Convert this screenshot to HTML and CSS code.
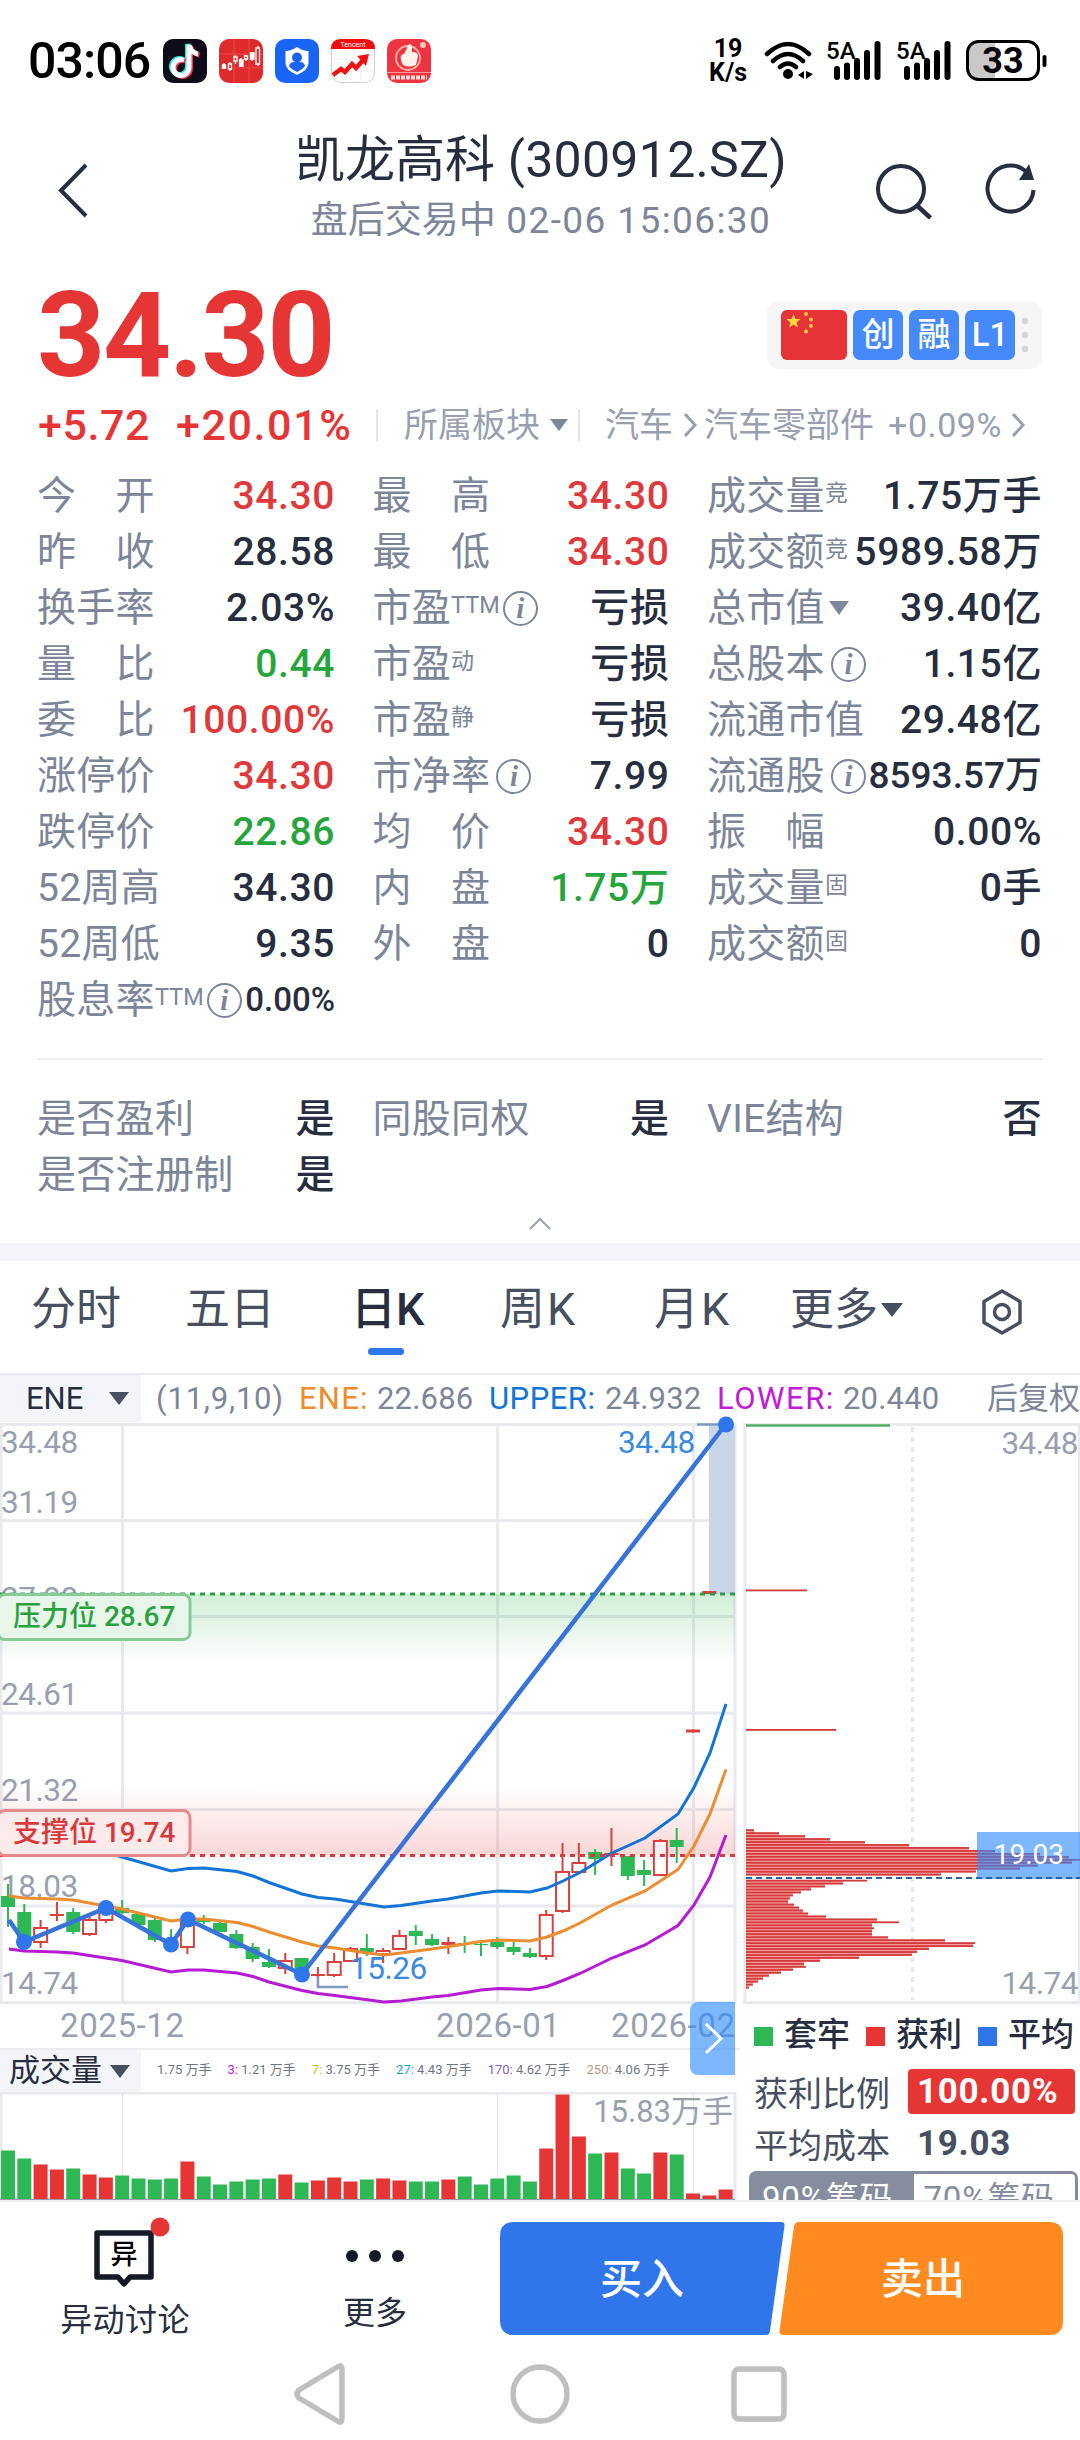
FILE: index.html
```
<!DOCTYPE html>
<html lang="zh-CN">
<head>
    <meta charset="UTF-8">
    <meta name="viewport" content="width=device-width, initial-scale=1.0">
    <title>凯龙高科 (300912.SZ)</title>
    <link rel="stylesheet" href="styles.css">
</head>
<body>
    <!-- Status bar -->
    <div class="status-bar">
        <span class="clock">03:06</span>
        <svg class="app" viewBox="0 0 44 44"><rect width="44" height="44" rx="10" fill="#0d0c18"/><g fill="none" stroke-width="5"><path d="M21 21a8 8 0 1 0 5 8V6q2 8 9 9" stroke="#25e8e4" transform="translate(-1.5 -1)"/><path d="M21 21a8 8 0 1 0 5 8V6q2 8 9 9" stroke="#fe2c55" transform="translate(1.5 1)"/><path d="M21 21a8 8 0 1 0 5 8V6q2 8 9 9" stroke="#fff"/></g></svg>
        <svg class="app" viewBox="0 0 44 44"><rect width="44" height="44" rx="10" fill="#e02a2c"/><path d="M0 15H44M0 29H44M15 0V44M30 0V44" stroke="#e84a4a"/><g stroke="#fff" fill="#fff" stroke-width="1.3"><path d="M5 24v6M11 23v9M16.500 16v9M22 19v9M27 16v6M33 13v9M39 7v20"/><path d="M3.500 26h3v3h-3zM20.500 21h3.500v6h-3.500zM31.500 14h3.500v6h-3.500z"/><path fill="#e02a2c" d="M9.500 25h3v5h-3zM15 18h3v4h-3zM25.500 17h3v3h-3zM37 9h3.500v16h-3.500z"/></g></svg>
        <svg class="app" viewBox="0 0 44 44"><rect width="44" height="44" rx="10" fill="#1764f6"/><path d="M22 8q6 4 11.500 4v12q0 7-11.500 12Q10.500 31 10.500 24V12Q16 12 22 8z" fill="#fff"/><circle cx="22" cy="18.500" r="5" fill="#1764f6"/><path d="M14 27q1-4 5-4h6q4 0 5 4-2 3-8 6-6-3-8-6z" fill="#1764f6"/></svg>
        <svg class="app" viewBox="0 0 44 44"><rect x=".5" y=".5" width="43" height="43" rx="10" fill="#fff" stroke="#ccc"/><path d="M0 10Q0 0 10 0H34Q44 0 44 10z" fill="#f50a0c"/><path d="M15 10V44M30 10V44M0 20H44M0 32H44" stroke="#eee"/><text x="22" y="8" class="tiny" text-anchor="middle">Tencent</text><path d="M2 36l8-6 4 3 7-8 4 4 9-10" fill="none" stroke="#f01214" stroke-width="4.500"/><path d="M26 17l12-2-3 12z" fill="#f01214"/></svg>
        <svg class="app" viewBox="0 0 44 44"><rect width="44" height="44" rx="10" fill="#ee3440"/><circle cx="21" cy="19" r="12" fill="none" stroke="#ffb7ad" stroke-width="1.800"/><path d="M14 16q4 0 7-10 3-2 4 1v6q6 0 6 4l-2 9q-7 3-13 0-3-5-2-10z" fill="#fff4ea"/><circle cx="36" cy="6" r="3" fill="#ffc6be"/><path d="M0 33.500H44" stroke="#f99"/><path d="M4 38.500H40" stroke="#ffd8d4" stroke-width="4" stroke-dasharray="4 1"/></svg>
        <div class="status-right">
            <div class="speed"><span>19</span><span>K/s</span></div>
            <svg class="wifi" viewBox="0 0 50 40"><g fill="none" stroke="#000" stroke-width="4.500" stroke-linecap="round"><path d="M3 13Q24-7 45 13M9 20Q24 6 39 20M16 26Q24 19 32 26"/></g><circle cx="24" cy="33" r="5"/><path d="M40 30v8l-6-4zM42 38v-8l7 3z"/></svg>
            <svg class="signal" viewBox="0 0 56 40"><text x="0" y="18" class="sig-text">5A</text><path d="M11 28V36M21 24.500V36M31 20V36M41 12V36M51.500 3V36" stroke="#000" stroke-width="6" stroke-linecap="round"/></svg>
            <svg class="signal" viewBox="0 0 56 40"><text x="0" y="18" class="sig-text">5A</text><path d="M11 28V36M21 24.500V36M31 20V36M41 12V36M51.500 3V36" stroke="#000" stroke-width="6" stroke-linecap="round"/></svg>
            <svg class="battery" viewBox="0 0 82 42"><path d="M29 2H14Q2 2 2 13V28Q2 39 14 39H29z" fill="#c9c9c9"/><rect x="1.500" y="1.500" width="71" height="38" rx="11" fill="none" stroke="#000" stroke-width="3"/><path d="M78.500 17v8" stroke="#000" stroke-width="4" stroke-linecap="round"/><text x="37" y="33" class="bat-text" text-anchor="middle">33</text></svg>
        </div>
    </div>

    <!-- Header -->
    <header class="header">
        <svg class="back" viewBox="0 0 40 60"><path d="M34 4L9 29.500L34 55" fill="none" stroke="#272e40" stroke-width="4"/></svg>
        <div class="titles">
            <h1>凯龙高科<span> (300912.SZ)</span></h1>
            <p>盘后交易中<span> 02-06 15:06:30</span></p>
        </div>
        <div class="head-icons">
            <svg viewBox="0 0 60 56"><circle cx="26" cy="26" r="23" fill="none" stroke="#272e40" stroke-width="4"/><path d="M42.500 43l13 12" stroke="#272e40" stroke-width="4.500"/></svg>
            <svg viewBox="0 0 60 56"><path d="M41 8.500A23 23 0 1 0 48.500 27" fill="none" stroke="#272e40" stroke-width="4"/><path d="M44 1l5 16H34z" fill="#272e40"/></svg>
        </div>
    </header>

    <!-- Price -->
    <section class="price-row">
        <span class="price">34.30</span>
        <div class="badges">
            <svg class="flag" viewBox="0 0 66 50"><rect width="66" height="50" rx="6" fill="#e53338"/><path d="M12.500 4l2 5h5l-4 3.500 1.500 5-4.500-3-4.500 3 1.500-5-4-3.500h5z" fill="#ffd83d"/><g fill="#ffc93d"><circle cx="25" cy="4" r="2"/><circle cx="30" cy="9.500" r="2"/><circle cx="30" cy="16" r="2"/><circle cx="25" cy="21.500" r="2"/></g></svg>
            <span>创</span><span>融</span><span class="lv">L1</span>
            <svg class="more-dots" viewBox="0 0 8 40"><g fill="#d5d6da"><circle cx="4" cy="6" r="3.200"/><circle cx="4" cy="20" r="3.200"/><circle cx="4" cy="34" r="3.200"/></g></svg>
        </div>
    </section>
    <section class="change-row">
        <b class="chg">+5.72</b><b class="pct">+20.01%</b>
        <div class="sector">所属板块<i class="tri"></i></div>
        <div class="industry">汽车<svg class="gt" viewBox="0 0 16 26"><path d="M2 2L12 13L2 24"/></svg>汽车零部件<em>+0.09%</em><svg class="gt last" viewBox="0 0 16 26"><path d="M2 2L12 13L2 24"/></svg></div>
    </section>

    <!-- Quote table -->
    <section class="quotes">
        <div class="cell"><span>今　开</span><b class="red">34.30</b></div>
        <div class="cell"><span>最　高</span><b class="red">34.30</b></div>
        <div class="cell"><span>成交量<sup>竞</sup></span><b>1.75万手</b></div>
        <div class="cell"><span>昨　收</span><b>28.58</b></div>
        <div class="cell"><span>最　低</span><b class="red">34.30</b></div>
        <div class="cell"><span>成交额<sup>竞</sup></span><b>5989.58万</b></div>
        <div class="cell"><span>换手率</span><b>2.03%</b></div>
        <div class="cell"><span>市盈<sup class="ttm">TTM</sup><i class="info">i</i></span><b>亏损</b></div>
        <div class="cell"><span>总市值<i class="tri big"></i></span><b>39.40亿</b></div>
        <div class="cell"><span>量　比</span><b class="green">0.44</b></div>
        <div class="cell"><span>市盈<sup>动</sup></span><b>亏损</b></div>
        <div class="cell"><span>总股本<i class="info">i</i></span><b>1.15亿</b></div>
        <div class="cell"><span>委　比</span><b class="red">100.00%</b></div>
        <div class="cell"><span>市盈<sup>静</sup></span><b>亏损</b></div>
        <div class="cell"><span>流通市值</span><b>29.48亿</b></div>
        <div class="cell"><span>涨停价</span><b class="red">34.30</b></div>
        <div class="cell"><span>市净率<i class="info">i</i></span><b>7.99</b></div>
        <div class="cell"><span>流通股<i class="info">i</i></span><b class="fit">8593.57万</b></div>
        <div class="cell"><span>跌停价</span><b class="green">22.86</b></div>
        <div class="cell"><span>均　价</span><b class="red">34.30</b></div>
        <div class="cell"><span>振　幅</span><b>0.00%</b></div>
        <div class="cell"><span>52周高</span><b>34.30</b></div>
        <div class="cell"><span>内　盘</span><b class="green">1.75万</b></div>
        <div class="cell"><span>成交量<sup>固</sup></span><b>0手</b></div>
        <div class="cell"><span>52周低</span><b>9.35</b></div>
        <div class="cell"><span>外　盘</span><b>0</b></div>
        <div class="cell"><span>成交额<sup>固</sup></span><b>0</b></div>
        <div class="cell"><span>股息率<sup class="ttm">TTM</sup><i class="info">i</i></span><b class="small">0.00%</b></div>
    </section>
    <section class="quotes extra">
        <div class="cell"><span>是否盈利</span><b>是</b></div>
        <div class="cell"><span>同股同权</span><b>是</b></div>
        <div class="cell"><span>VIE结构</span><b>否</b></div>
        <div class="cell"><span>是否注册制</span><b>是</b></div>
    </section>
    <div class="collapse"><svg viewBox="0 0 24 14"><path d="M2 12L12 2L22 12" fill="none" stroke="#9aa1b0" stroke-width="2"/></svg></div>

    <!-- Period tabs -->
    <nav class="tabs">
        <span>分时</span><span>五日</span><span class="active">日K</span><span>周K</span><span>月K</span><span>更多<i class="tri tab-tri"></i></span>
        <svg class="hex" viewBox="0 0 42 46"><path d="M21 2L39 12.500V33.500L21 44L3 33.500V12.500z" fill="none" stroke="#474f61" stroke-width="3.500" stroke-linejoin="round"/><circle cx="21" cy="23" r="7.500" fill="none" stroke="#474f61" stroke-width="3.500"/></svg>
    </nav>
    <div class="indicator">
        <span class="picker">ENE<i class="tri dark"></i></span>
        <span class="params">(11,9,10)</span>
        <span class="ene">ENE:</span><span class="v1">22.686</span>
        <span class="upper">UPPER:</span><span class="v2">24.932</span>
        <span class="lower">LOWER:</span><span class="v3">20.440</span>
        <span class="fq">后复权</span>
    </div>

    <!-- Charts -->
    <main class="charts">
        <div class="left">
            <svg class="kline" width="740" height="584" viewBox="0 1422 740 584">
                <defs>
                    <linearGradient id="gGreen" x1="0" y1="0" x2="0" y2="1"><stop offset="0" stop-color="#2bb24c" stop-opacity=".22"/><stop offset="1" stop-color="#2bb24c" stop-opacity="0"/></linearGradient>
                    <linearGradient id="gRed" x1="0" y1="0" x2="0" y2="1"><stop offset="0" stop-color="#e63535" stop-opacity="0"/><stop offset="1" stop-color="#e63535" stop-opacity=".2"/></linearGradient>
                </defs>
                <path class="grid" d="M0 1424.500H736M0 1520.500H736M0 1616.500H736M0 1713H736M0 1809.500H736M0 1906H736M0 2002.500H736M1 1424V2002M122.500 1424V2002M497.500 1424V2002M693.500 1424V2002M735 1424V2002"/>
                <rect x="709" y="1426" width="26" height="168" fill="#c9d5e8"/>
                <g class="axis">
                    <text x="1" y="1453">34.48</text><text x="1" y="1513">31.19</text><text x="1" y="1609">27.90</text><text x="1" y="1705">24.61</text>
                    <text x="1" y="1801">21.32</text><text x="1" y="1897">18.03</text><text x="1" y="1994">14.74</text>
                </g>
                <rect x="0" y="1594" width="735" height="70" fill="url(#gGreen)"/>
                <rect x="0" y="1785" width="735" height="70" fill="url(#gRed)"/>
                <g id="candles"></g>
                <polyline class="ln" stroke="#1374d8" points="80,1846 122,1857 171,1871 188,1868.500 204,1868 237,1871.500 253,1876 269,1882.500 302,1894 318,1897.500 335,1899 384,1907 401,1905.500 432,1901 448,1899 481,1893 498,1891 530,1892 547,1888 563,1881 580,1872.500 612,1853 645,1838 678,1814 694,1787.500 710,1753 726,1704"/>
                <polyline class="ln" stroke="#ea8e31" points="9,1896 24,1898 57,1899 73,1900 106,1906 122,1909 171,1921 188,1919 204,1919 237,1922.500 253,1926.500 269,1932 302,1942 318,1946 335,1948 367,1953 384,1955 401,1953 432,1949 465,1944 481,1941.500 498,1940 530,1941 547,1937 563,1931 580,1923 612,1905 645,1891 678,1869.500 694,1846 710,1814 726,1769.500"/>
                <polyline class="ln" stroke="#b51cd2" points="9,1949 24,1951 57,1952 73,1953 122,1960.500 171,1972 188,1970 204,1970 237,1973 253,1976.500 269,1982 302,1990.500 318,1993.500 335,1995.500 384,2002 401,2001 432,1997 448,1995.500 481,1990 498,1988.500 530,1989.500 547,1986.500 563,1980.500 580,1973.500 612,1958 645,1945 678,1925.500 694,1905 710,1877 726,1835"/>
                <path d="M0 1594H735" stroke="#2aa040" stroke-width="3" stroke-dasharray="5 5"/>
                <path d="M0 1855.500H735" stroke="#d63a3c" stroke-width="3" stroke-dasharray="5 5"/>
                <path d="M697 1424.500H722M318 1977V1987H348" fill="none" stroke="#7f9bc0" stroke-width="2.500"/>
                <polyline points="9,1920 24,1942 106,1908 171,1944.500 188,1919.500 302,1974.500 726,1424" fill="none" stroke="#3873da" stroke-width="4.500"/>
                <g fill="#2f76ea"><circle cx="24" cy="1942" r="8"/><circle cx="106" cy="1908" r="8"/><circle cx="171" cy="1944.500" r="8"/><circle cx="188" cy="1919.500" r="8"/><circle cx="302" cy="1974.500" r="8"/><circle cx="726" cy="1424.500" r="8"/></g>
                <g class="axis mark"><text x="618" y="1453">34.48</text><text x="350" y="1979">15.26</text></g>
                <rect x="-2" y="1594.500" width="192" height="45" rx="7" fill="#e8f6ea" stroke="#85cb95" stroke-width="3"/>
                <text x="13" y="1626" class="level" fill="#2aa040">压力位 28.67</text>
                <rect x="-2" y="1810.500" width="192" height="45" rx="7" fill="#fdeaea" stroke="#e58a8c" stroke-width="3"/>
                <text x="13" y="1842" class="level" fill="#d63a3c">支撑位 19.74</text>
            </svg>
            <div class="dates"><span>2025-12</span><span>2026-01</span><span>2026-02</span></div>
            <div class="vol-head">
                <span class="picker">成交量<i class="tri dark"></i></span>
                <div class="mas"><span>1.75 万手</span><span><i class="m3">3:</i> 1.21 万手</span><span><i class="m7">7:</i> 3.75 万手</span><span><i class="m27">27:</i> 4.43 万手</span><span><i class="m170">170:</i> 4.62 万手</span><span><i class="m250">250:</i> 4.06 万手</span></div>
            </div>
            <svg class="volume" width="740" height="108" viewBox="0 2092 740 108">
                <path class="grid" d="M0 2093H736M1 2093V2200M735 2093V2200"/>
                <path d="M122.500 2094V2200M497.500 2094V2200M693.500 2094V2200" stroke="#e4e5ea" stroke-width="1"/>
                <g id="bars"></g>
                <path d="M0 2199.500H735" stroke="#9a9ca8"/>
                <text x="733" y="2122" class="vol-max" text-anchor="end">15.83万手</text>
            </svg>
            <div class="expand"><svg viewBox="0 0 45 73"><path d="M16 22L31 36.500L16 51" fill="none" stroke="#fff" stroke-width="3"/></svg></div>
        </div>
        <div class="right">
            <svg class="chips" width="340" height="584" viewBox="740 1422 340 584">
                <path class="grid" d="M743 1424.500H1080M745 1424V2002M743 2002.500H1080M1079.500 1424V2002"/>
                <path d="M912.500 1427V2000" stroke="#e8e9ee" stroke-width="3" stroke-dasharray="5 5"/>
                <path d="M746 1425.500H890" stroke="#4fae63" stroke-width="2.500"/>
                <g id="chips"></g>
                <rect x="977" y="1832" width="103" height="47" fill="#2d8cff" fill-opacity=".62"/>
                <path d="M746 1878H1080" stroke="#2b62b0" stroke-width="2" stroke-dasharray="6 4"/>
                <text x="1064" y="1864" class="avg" text-anchor="end">19.03</text>
                <g class="axis" text-anchor="end"><text x="1078" y="1454">34.48</text><text x="1078" y="1994">14.74</text></g>
            </svg>
            <div class="legend"><span class="lg-g">套牢</span><span class="lg-r">获利</span><span class="lg-b">平均</span></div>
            <div class="stat"><span>获利比例</span><b class="hot">100.00%</b></div>
            <div class="stat second"><span>平均成本</span><b>19.03</b></div>
            <div class="switch"><span class="on">90%筹码</span><span>70%筹码</span></div>
        </div>
    </main>

    <!-- Bottom actions -->
    <footer class="actions">
        <div class="act">
            <svg width="92" height="76" viewBox="0 0 92 76"><path d="M18 17H72V61H51L45 68L39 61H18z" fill="none" stroke="#151a26" stroke-width="5.500" stroke-linejoin="round"/><text x="45" y="48" text-anchor="middle" class="yi">异</text><circle cx="81" cy="11" r="9.500" fill="#e63535"/></svg>
            <span>异动讨论</span>
        </div>
        <div class="act more">
            <svg width="60" height="76" viewBox="0 0 60 76"><g fill="#151a26"><circle cx="7" cy="40" r="6"/><circle cx="30" cy="40" r="6"/><circle cx="53" cy="40" r="6"/></g></svg>
            <span>更多</span>
        </div>
        <div class="trade">
            <svg width="564" height="114" viewBox="0 0 564 114">
                <path d="M14 0H281Q285 0 284.500 4L270 109Q269.500 113 266 113H14Q0 113 0 99V14Q0 0 14 0z" fill="#3076ea"/>
                <path d="M299 0H549Q563 0 563 14V99Q563 113 549 113H283Q279 113 279.500 109L294 4Q295 0 299 0z" fill="#ff8a20"/>
                <text x="142" y="72" text-anchor="middle">买入</text>
                <text x="423" y="72" text-anchor="middle">卖出</text>
            </svg>
        </div>
    </footer>
    <div class="sys-nav">
        <svg width="500" height="64" viewBox="0 0 500 64"><g fill="none" stroke="#bfbfbf" stroke-width="5.500" stroke-linejoin="round"><path d="M49 4Q52 3 52 8V56Q52 61 49 60L9 36Q5 32 9 28z"/><circle cx="250" cy="32" r="27"/><rect x="444" y="7" width="50" height="50" rx="5"/></g></svg>
    </div>
    <script src="script.js"></script>
</body>
</html>
```
FILE: styles.css
```
* {
    box-sizing: border-box;
}
body {
    margin: 0;
    width: 1080px;
    height: 2440px;
    overflow: hidden;
    background-color: #fff;
    font-family: Roboto, "Noto Sans CJK SC", sans-serif;
    color: #272e40;
}
svg {
    display: block;
    flex: none;
}
i, em {
    font-style: normal;
}
.tri {
    display: inline-block;
    border: 9px solid transparent;
    border-top: 12px solid #7d8699;
    border-bottom: 0;
}

/* Status bar */
.status-bar {
    display: flex;
    align-items: center;
    gap: 12px;
    height: 122px;
    padding: 0 32px 0 28px;
    color: #000;
}
.clock {
    width: 123px;
    font-size: 50px;
    font-weight: 500;
    letter-spacing: -0.9px;
}
.app {
    width: 44px;
    height: 44px;
}
.tiny {
    font-size: 7px;
    fill: #fff;
}
.status-right {
    display: flex;
    align-items: center;
    margin-left: auto;
}
.speed {
    display: flex;
    flex-direction: column;
    align-items: center;
    width: 42px;
    font-size: 25px;
    font-weight: 700;
    line-height: 24px;
    margin-right: 15px;
}
.wifi {
    width: 50px;
    height: 40px;
    margin-right: 12px;
}
.signal {
    width: 56px;
    height: 40px;
    margin-right: 14px;
    overflow: visible;
}
.sig-text {
    font-size: 24px;
    font-weight: 500;
}
.battery {
    width: 82px;
    height: 42px;
}
.bat-text {
    font-size: 36px;
    font-weight: 700;
}

/* Header */
.header {
    display: flex;
    align-items: center;
    justify-content: space-between;
    height: 138px;
    padding: 0 35px 0 52px;
}
.back {
    width: 40px;
    height: 60px;
    margin-right: 115px;
}
.titles {
    text-align: center;
    white-space: nowrap;
}
.titles h1 {
    margin: 0;
    font-size: 50px;
    font-weight: 400;
    line-height: 66px;
}
.titles h1 span {
    letter-spacing: 0.3px;
}
.titles p {
    margin: 0;
    padding-bottom: 6px;
    font-size: 37px;
    line-height: 56px;
    color: #7d8699;
}
.titles p span {
    letter-spacing: 1.4px;
}
.head-icons {
    display: flex;
    gap: 50px;
}
.head-icons svg {
    width: 60px;
    height: 56px;
}

/* Price */
.price-row {
    display: flex;
    align-items: center;
    justify-content: space-between;
    height: 148px;
    padding: 2px 38px 0 37px;
}
.price {
    font-size: 119px;
    font-weight: 700;
    letter-spacing: -2.3px;
    color: #e63535;
}
.badges {
    display: flex;
    align-items: center;
    gap: 6px;
    height: 68px;
    padding: 0 13px 0 14px;
    border-radius: 12px;
    background-color: #f6f6f7;
}
.badges span {
    width: 50px;
    height: 50px;
    border-radius: 7px;
    background-color: #4589fb;
    color: #fff;
    font-size: 33px;
    font-weight: 500;
    line-height: 50px;
    text-align: center;
}
.flag {
    width: 66px;
    height: 50px;
}
.more-dots {
    width: 8px;
    height: 40px;
}
.change-row {
    display: flex;
    align-items: center;
    height: 34px;
    padding-left: 38px;
    font-size: 34px;
    line-height: 34px;
    white-space: nowrap;
    color: #98a0b0;
}
.change-row b {
    font-size: 43px;
    font-weight: 500;
    letter-spacing: 0.6px;
    color: #e63535;
}
.chg {
    width: 138px;
}
.change-row .pct {
    width: 200px;
    letter-spacing: 1.6px;
}
.sector {
    display: flex;
    align-items: center;
    width: 204px;
    height: 32px;
    padding-left: 26px;
    border-left: 2px solid #e3e5ea;
    border-right: 2px solid #e3e5ea;
}
.sector .tri {
    margin-left: 10px;
}
.industry {
    display: flex;
    align-items: center;
    padding-left: 25px;
}
.industry em {
    margin-left: 14px;
    letter-spacing: 0.6px;
}
.gt {
    width: 16px;
    height: 26px;
    margin: 0 5px 0 10px;
}
.gt.last {
    margin-left: 9px;
}
.gt path {
    fill: none;
    stroke: #98a0b0;
    stroke-width: 3;
}

/* Quote table */
.quotes {
    display: grid;
    grid-template-columns: 298px 297px 335px;
    grid-auto-rows: 56px;
    column-gap: 37.5px;
    height: 618px;
    margin: 0 37px;
    padding-top: 26px;
    border-bottom: 2px solid #eeeff2;
}
.cell {
    display: flex;
    align-items: center;
    justify-content: space-between;
    font-size: 39px;
    line-height: 56px;
    letter-spacing: 0.3px;
    white-space: nowrap;
    color: #7d8699;
}
.cell span {
    display: flex;
    align-items: center;
}
.cell b {
    font-weight: 500;
    letter-spacing: 0.6px;
    color: #272e40;
}
.cell b.red {
    color: #df3a3b;
}
.cell b.green {
    color: #26a53d;
}
.cell b.fit {
    font-size: 37px;
    letter-spacing: 0;
}
.cell b.small {
    font-size: 33px;
    letter-spacing: 0;
}
.cell sup {
    margin-bottom: 5px;
    font-size: 23px;
    line-height: 1;
    letter-spacing: 0;
}
.cell .ttm {
    font-size: 23.5px;
}
.info {
    display: inline-block;
    width: 35px;
    height: 35px;
    margin-left: 6px;
    margin-right: -4px;
    border: 2px solid #7d8699;
    border-radius: 50%;
    font: italic bold 29px/30px "Liberation Serif", serif;
    letter-spacing: 0;
    text-align: center;
}
.ttm + .info {
    margin-left: 3px;
}
.tri.big {
    margin-left: 4px;
    border-width: 14px 10px 0;
}
.extra {
    height: 158px;
    padding-top: 31px;
    border: 0;
}
.collapse {
    display: flex;
    justify-content: center;
    height: 25px;
}
.collapse svg {
    width: 24px;
    height: 14px;
    margin-top: -1px;
}

/* Tabs */
.tabs {
    display: flex;
    height: 132px;
    border-top: 18px solid #f4f6fa;
    border-bottom: 2px solid #ebecf0;
    padding-left: 31px;
    font-size: 45px;
    line-height: 98px;
    white-space: nowrap;
    color: #474f61;
}
.tabs span {
    width: 154px;
    flex: none;
}
.tabs span:nth-child(2) {
    width: 166px;
}
.tabs span:nth-child(3) {
    width: 149px;
}
.tabs span:nth-child(4), .tabs span:nth-child(5) {
    letter-spacing: 2px;
}
.tabs span:nth-child(5) {
    width: 136px;
}
.tabs span:nth-child(6) {
    width: 191px;
    font-size: 44px;
}
.tabs .active {
    font-weight: 500;
    color: #272e40;
}
.tabs .active::after {
    content: "";
    display: block;
    width: 36px;
    height: 7px;
    margin: -11px 0 0 17px;
    border-radius: 4px;
    background-color: #2f76e8;
}
.tab-tri {
    margin: 0 0 8px 3px;
    border-width: 14px 11px 0;
    border-top-color: #474f61;
}
.hex {
    width: 42px;
    height: 46px;
    margin-top: 28px;
}
.indicator {
    display: flex;
    height: 47px;
    font-size: 31px;
    line-height: 47px;
    white-space: nowrap;
    color: #7d8699;
}
.picker {
    display: flex;
    align-items: center;
    width: 141px;
    padding-left: 26px;
    background-color: #f3f5fa;
    color: #272e40;
}
.picker .tri {
    margin-left: 26px;
}
.tri.dark {
    border-width: 13px 10px 0;
    border-top-color: #474f61;
}
.params {
    width: 158px;
    padding-left: 15px;
    letter-spacing: 0.8px;
}
.ene {
    width: 78px;
    letter-spacing: 1.2px;
    color: #ee8c2c;
}
.v1, .v2, .v3 {
    width: 112px;
    letter-spacing: 0.2px;
}
.upper {
    width: 116px;
    letter-spacing: 0.5px;
    color: #1374d8;
}
.lower {
    width: 126px;
    letter-spacing: 1.5px;
    color: #c31ad9;
}
.v3 {
    width: 144px;
}

/* Charts */
.charts {
    display: flex;
    height: 780px;
    border-bottom: 2px solid #ebecf0;
}
.left {
    position: relative;
    width: 740px;
}
.right {
    width: 340px;
    overflow: hidden;
}
.kline {
    overflow: visible;
}
.grid {
    fill: none;
    stroke: #e9eaef;
    stroke-width: 3;
}
.axis {
    font-size: 31.5px;
    letter-spacing: -0.5px;
    fill: #98a0b0;
}
.mark {
    fill: #3a8ade;
}
.ln {
    fill: none;
    stroke-width: 3;
}
.level {
    font-size: 28px;
    font-weight: 500;
}
.dates {
    display: flex;
    height: 44px;
    padding-left: 60px;
    border-bottom: 2px solid #ebecf0;
    font-size: 33px;
    line-height: 40px;
    letter-spacing: 0.6px;
    color: #98a0b0;
}
.dates span:nth-child(1) {
    width: 376px;
}
.dates span:nth-child(2) {
    width: 175px;
}
.vol-head {
    display: flex;
    height: 42px;
    line-height: 40px;
}
.vol-head .picker {
    padding-left: 9px;
    font-size: 31px;
}
.vol-head .tri {
    margin-left: 8px;
}
.mas {
    display: flex;
    gap: 16px;
    padding-left: 16px;
    font-size: 13px;
    white-space: pre;
    color: #6d7587;
}
.m3 { color: #c31ad9; }
.m7 { color: #d8bd1c; }
.m27 { color: #19a6e0; }
.m170 { color: #8060d0; }
.m250 { color: #b59a88; }
.vol-max {
    font-size: 31px;
    fill: #98a0b0;
}
.expand {
    position: absolute;
    left: 690px;
    top: 580px;
    width: 45px;
    height: 73px;
    border-radius: 8px 0 0 8px;
    background-color: rgba(45, 140, 255, 0.62);
}
.avg {
    font-size: 28px;
    fill: #fff;
}
.legend {
    display: flex;
    justify-content: space-between;
    height: 60px;
    padding: 0 6px 0 14px;
    font-size: 33px;
    font-weight: 500;
    line-height: 58px;
}
.legend span::before {
    content: "";
    display: inline-block;
    width: 19px;
    height: 19px;
    margin-right: 11px;
    background-color: #2db855;
}
.legend .lg-r::before {
    background-color: #e63535;
}
.legend .lg-b::before {
    background-color: #2f76ea;
}
.stat {
    display: flex;
    align-items: center;
    height: 50px;
    padding-left: 14px;
    font-size: 34px;
    white-space: nowrap;
    color: #474f61;
}
.stat b {
    margin-left: 18px;
    width: 167px;
    height: 45px;
    padding-left: 9px;
    font-size: 35px;
    font-weight: 700;
    line-height: 45px;
    letter-spacing: 0.7px;
}
.stat .hot {
    border-radius: 4px;
    background-color: #e63535;
    color: #fff;
}
.second {
    height: 55px;
}
.switch {
    display: flex;
    width: 329px;
    height: 52px;
    margin-left: 9px;
    border: 3px solid #868d9e;
    border-radius: 7px;
    font-size: 33px;
    line-height: 50px;
    letter-spacing: 0.8px;
    color: #868d9e;
}
.switch span {
    width: 50%;
    padding-left: 10px;
}
.switch .on {
    background-color: #868d9e;
    color: #fff;
}

/* Bottom actions */
.actions {
    display: flex;
    height: 150px;
    padding-top: 14px;
}
.act {
    display: flex;
    flex-direction: column;
    align-items: center;
    width: 250px;
    font-size: 32px;
    line-height: 54px;
}
.act:first-child span {
    margin-top: 1px;
    letter-spacing: 0.4px;
}
.more span {
    margin-top: -6px;
}
.yi {
    font-size: 27px;
    font-weight: 500;
}
.trade {
    padding-top: 6px;
}
.trade text {
    font-size: 42px;
    font-weight: 500;
    fill: #fff;
}
.sys-nav {
    display: flex;
    justify-content: center;
    padding-top: 10px;
}
```
FILE: script.js
```
// x position of a trading day in both left charts
const dayX = i => 8 + 16.31 * i;
const RED = "#d9413f";
const GREEN = "#2db855";

function add(parent, html) {
    document.getElementById(parent).insertAdjacentHTML("beforeend", html);
}

// [type, wick top, wick bottom, body top, body bottom]; r = hollow, x = filled red
const candles = [
    ["g", 1884, 1927, 1896, 1907], ["g", 1904, 1942, 1912, 1938], ["r", 1920, 1948, 1927, 1942],
    ["x", 1902, 1921, 1914, 1916], ["g", 1908, 1934, 1912, 1932], ["r", 1917, 1936, 1919, 1934],
    ["r", 1906, 1923, 1908, 1920], ["g", 1900, 1914, 1908, 1913], ["g", 1913, 1925, 1914, 1925],
    ["g", 1918, 1942, 1920, 1940], ["g", 1929, 1952, 1940, 1947], ["r", 1918, 1954, 1920, 1947],
    ["g", 1915, 1924, 1920, 1922], ["g", 1921, 1932, 1923, 1932], ["g", 1930, 1949, 1934, 1948],
    ["g", 1943, 1962, 1947, 1959], ["g", 1949, 1968, 1962, 1967], ["r", 1953, 1974, 1960, 1968],
    ["g", 1958, 1978, 1958, 1976], ["x", 1967, 1987, 1974, 1976], ["r", 1953, 1977, 1961, 1975],
    ["r", 1947, 1961, 1948, 1961], ["g", 1934, 1956, 1948, 1952], ["r", 1948, 1963, 1950, 1954],
    ["r", 1930, 1950, 1935, 1949], ["g", 1925, 1945, 1931, 1936], ["g", 1934, 1946, 1939, 1945],
    ["x", 1937, 1954, 1942, 1945], ["g", 1936, 1953, 1943, 1944], ["g", 1942, 1956, 1944, 1945],
    ["g", 1937, 1949, 1942, 1947], ["g", 1942, 1955, 1947, 1952], ["g", 1948, 1958, 1953, 1957],
    ["r", 1910, 1960, 1914, 1956], ["r", 1843, 1913, 1871, 1911], ["r", 1843, 1872, 1862, 1872],
    ["g", 1849, 1875, 1852, 1859], ["x", 1828, 1866, 1853, 1855], ["g", 1856, 1880, 1856, 1876],
    ["g", 1860, 1886, 1870, 1875], ["r", 1839, 1875, 1840, 1875], ["g", 1828, 1863, 1840, 1847],
    ["x", 1730, 1732, 1729.5, 1732.5], ["x", 1592, 1594, 1591, 1594]
];
candles.forEach(([type, hi, lo, top, bottom], i) => {
    const x = dayX(i);
    const color = type === "g" ? GREEN : RED;
    const h = bottom - top;
    add("candles", `<path d="M${x} ${hi}V${top}M${x} ${bottom}V${lo}" stroke="${color}" stroke-width="2"/>`);
    if (type === "r") {
        add("candles", `<rect x="${x - 6.5}" y="${top + 1}" width="13" height="${h - 1}" fill="#fff" fill-opacity=".6" stroke="${color}" stroke-width="2"/>`);
    } else {
        add("candles", `<rect x="${x - 7}" y="${top}" width="14" height="${h}" fill="${color}"/>`);
    }
});

// volume bar heights in px
const volumes = [
    [49, "g"], [41, "g"], [35, "r"], [30, "r"], [31, "g"], [25, "r"], [22, "r"], [24, "g"], [21, "g"], [20, "g"],
    [21, "g"], [38, "r"], [23, "g"], [15, "g"], [18, "g"], [20, "g"], [21, "g"], [25, "r"], [17, "g"], [19, "r"],
    [22, "r"], [18, "r"], [20, "g"], [21, "r"], [19, "r"], [18, "g"], [18, "g"], [20, "r"], [23, "g"], [15, "g"],
    [21, "g"], [24, "g"], [18, "g"], [51, "r"], [105, "r"], [63, "r"], [46, "g"], [47, "r"], [31, "g"], [26, "g"],
    [47, "r"], [45, "g"], [6, "r"], [4, "r"], [10, "r"]
];
volumes.forEach(([h, type], i) => {
    add("bars", `<rect x="${dayX(i) - 7}" y="${2199.5 - h}" width="14" height="${h}" fill="${type === "g" ? GREEN : "#e63535"}"/>`);
});

// chip distribution, one bar every 2.974px
const chips = [
    8, 33, 59, 84, 119, 163, 223, 249, 294, 323, 334, 326, 292, 274, 230, 195, 0, 121, 97, 79, 65, 55, 47, 44,
    42, 48, 53, 57, 62, 80, 131, 153, 126, 128, 126, 126, 142, 199, 229, 227, 183, 171, 166, 113, 74, 58, 60,
    47, 35, 23, 17, 12, 7, 3
];
function chip(y, w) {
    add("chips", `<rect x="746" y="${y - 1}" width="${w}" height="1.8" fill="#d23a3c"/>`);
}
chips.forEach((w, i) => {
    const y = 1830.2 + i * 2.974;
    const next = Math.min(w, chips[i + 1] || 0);
    add("chips", `<rect x="746" y="${y}" width="${next}" height="3" fill="#f79a9a"/>`);
    chip(y, w);
});
chip(1590.5, 61);
chip(1730, 90);
```
